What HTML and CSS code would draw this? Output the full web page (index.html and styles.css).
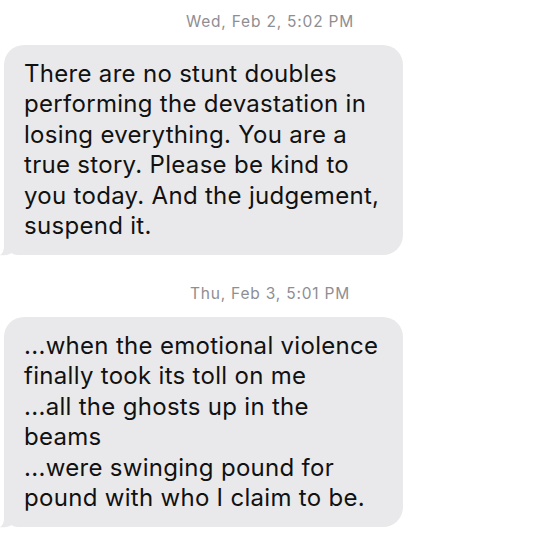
FILE: index.html
```html
<!DOCTYPE html>
<html lang="en">
<head>
  <meta charset="UTF-8">
  <meta name="viewport" content="width=device-width, initial-scale=1.0">
  <title>Messages</title>
  <link rel="stylesheet" href="styles.css">
</head>
<body>

  <div class="thread">
    <div class="timestamp">Wed, Feb 2, 5:02 PM</div>
    <div class="bubble">
      There are no stunt doubles<br>
      performing the devastation in<br>
      losing everything. You are a<br>
      true story. Please be kind to<br>
      you today. And the judgement,<br>
      suspend it.
      <svg class="tail" width="24" height="23" viewBox="0 0 24 23">
        <path d="M4 0 H24 V22 H18 C15 22 13 21 11.5 20 C9 22 4 22.6 0 22.2 C3 20 4 17 4 13 Z"/>
      </svg>
    </div>

    <div class="timestamp">Thu, Feb 3, 5:01 PM</div>
    <div class="bubble">
      ...when the emotional violence<br>
      finally took its toll on me<br>
      ...all the ghosts up in the<br>
      beams<br>
      ...were swinging pound for<br>
      pound with who I claim to be.
      <svg class="tail" width="24" height="23" viewBox="0 0 24 23">
        <path d="M4 0 H24 V22 H18 C15 22 13 21 11.5 20 C9 22 4 22.6 0 22.2 C3 20 4 17 4 13 Z"/>
      </svg>
    </div>
  </div>

</body>
</html>
```

FILE: styles.css
```css
body {
  margin: 0;
  background-color: #fff;
  font-family: Inter, "Liberation Sans", sans-serif;
}
.thread {
  display: flex;
  flex-direction: column;
  align-items: flex-start;
  padding: 12px 0 0 4px;
}
.timestamp {
  align-self: stretch;
  text-align: center;
  font-size: 15.5px;
  letter-spacing: 0.8px;
  line-height: 20px;
  color: #8e8e93;
  margin-bottom: 13px;
  padding-right: 4px;
}
.bubble {
  position: relative;
  width: 359px;
  padding: 13.5px 20px;
  background-color: #e9e9eb;
  border-radius: 20px;
  font-size: 24px;
  letter-spacing: 0.3px;
  line-height: 30.5px;
  color: #111;
  white-space: nowrap;
  margin-bottom: 29px;
}
.bubble .tail {
  position: absolute;
  left: -4px;
  bottom: -1px;
  fill: #e9e9eb;
}
```
